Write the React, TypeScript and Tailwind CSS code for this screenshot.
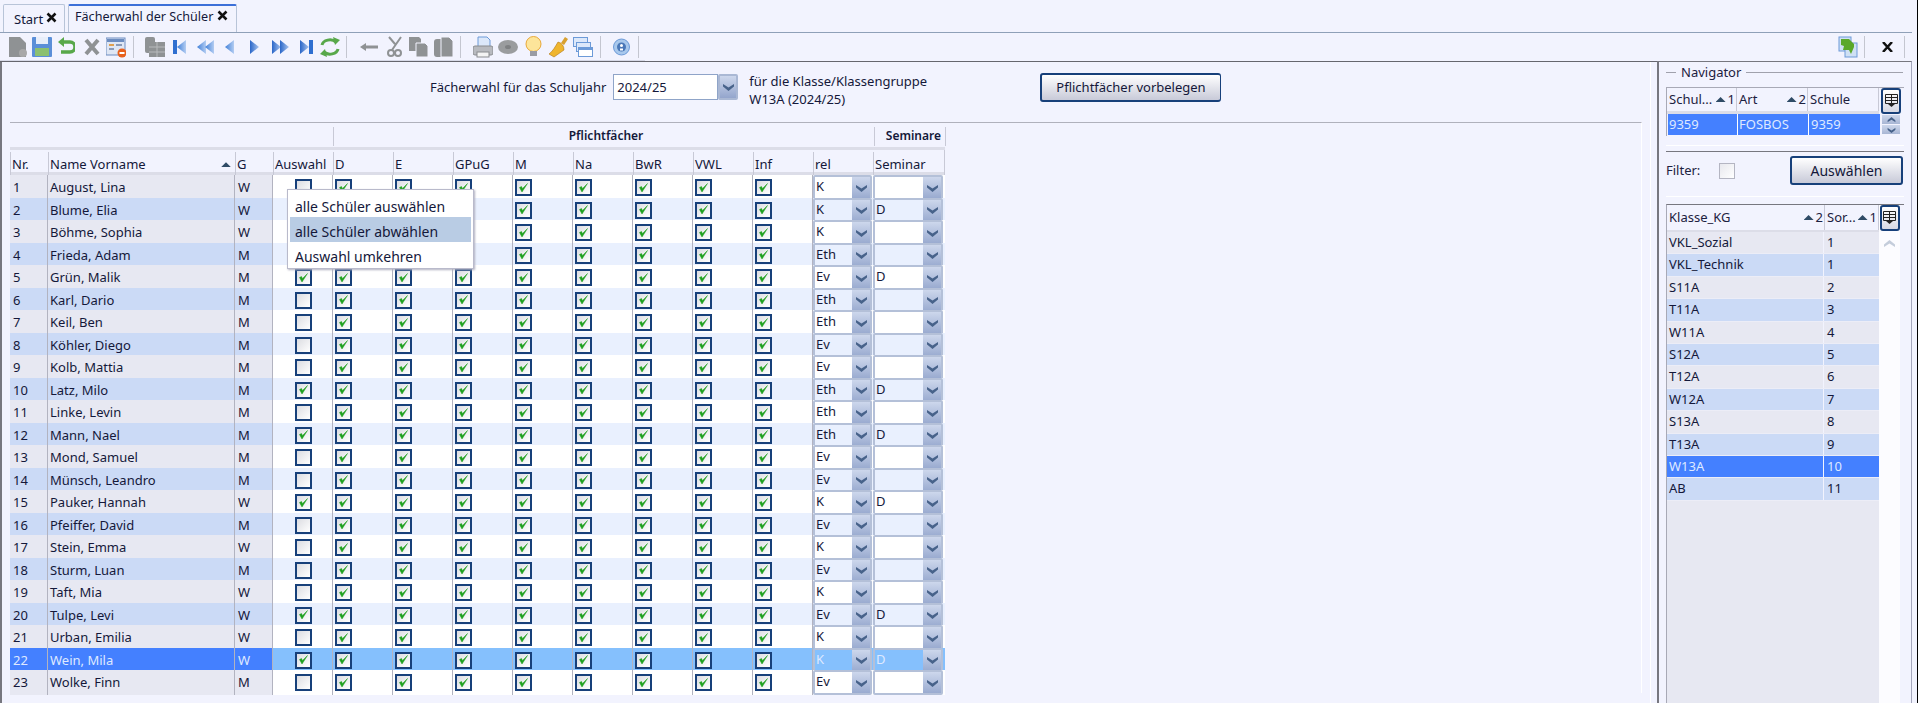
import type { ReactNode } from "react";

const students: [string, string, boolean, string, string][] = [
  ["August, Lina", "W", false, "K", ""],
  ["Blume, Elia", "W", false, "K", "D"],
  ["Böhme, Sophia", "W", false, "K", ""],
  ["Frieda, Adam", "M", false, "Eth", ""],
  ["Grün, Malik", "M", true, "Ev", "D"],
  ["Karl, Dario", "M", false, "Eth", ""],
  ["Keil, Ben", "M", false, "Eth", ""],
  ["Köhler, Diego", "M", false, "Ev", ""],
  ["Kolb, Mattia", "M", false, "Ev", ""],
  ["Latz, Milo", "M", true, "Eth", "D"],
  ["Linke, Levin", "M", false, "Eth", ""],
  ["Mann, Nael", "M", true, "Eth", "D"],
  ["Mond, Samuel", "M", false, "Ev", ""],
  ["Münsch, Leandro", "M", false, "Ev", ""],
  ["Pauker, Hannah", "W", true, "K", "D"],
  ["Pfeiffer, David", "M", false, "Ev", ""],
  ["Stein, Emma", "W", false, "K", ""],
  ["Sturm, Luan", "M", false, "Ev", ""],
  ["Taft, Mia", "W", false, "K", ""],
  ["Tulpe, Levi", "W", true, "Ev", "D"],
  ["Urban, Emilia", "W", false, "K", ""],
  ["Wein, Mila", "W", true, "K", "D"],
  ["Wolke, Finn", "M", false, "Ev", ""],
];

const subjects = ["D", "E", "GPuG", "M", "Na", "BwR", "VWL", "Inf"];

const classes: [string, number][] = [
  ["VKL_Sozial", 1],
  ["VKL_Technik", 1],
  ["S11A", 2],
  ["T11A", 3],
  ["W11A", 4],
  ["S12A", 5],
  ["T12A", 6],
  ["W12A", 7],
  ["S13A", 8],
  ["T13A", 9],
  ["W13A", 10],
  ["AB", 11],
];

const cols = "grid grid-cols-[38px_187px_38px_60px_60px_60px_60px_60px_60px_60px_60px_60px_60px_72px]";

function Ico({ w = 20, className = "", children }: { w?: number; className?: string; children: ReactNode }) {
  return (
    <svg width={w} height={22} viewBox={`0 0 ${w} 22`} className={`shrink-0 ${className}`}>
      {children}
    </svg>
  );
}

function Sep({ className = "" }: { className?: string }) {
  return <div className={`w-px h-[22px] bg-[#c4c6d0] shrink-0 ${className}`} />;
}

function Tri({ dir, dbl, bar, className = "" }: { dir: "l" | "r"; dbl?: boolean; bar?: boolean; className?: string }) {
  const one = (x: number) =>
    dir === "l" ? `M${x + 9} 4 L${x} 11 L${x + 9} 18 Z` : `M${x} 4 L${x + 9} 11 L${x} 18 Z`;
  const id = dir === "l" ? "navl" : "navr";
  return (
    <Ico w={dbl ? 18 : bar ? 14 : 10} className={className}>
      <defs>
        <linearGradient id={id} x1="0" y1="0" x2="1" y2="0">
          <stop offset="0" stopColor={dir === "l" ? "#3f7fd8" : "#2a66c8"} />
          <stop offset="1" stopColor={dir === "l" ? "#b4cdf2" : "#a8c4ee"} />
        </linearGradient>
      </defs>
      {bar && <rect x={dir === "l" ? 0 : 10} y="4" width="4" height="14" fill="#2f6fd0" />}
      <path d={one(bar ? (dir === "l" ? 4 : 1) : 0)} fill={`url(#${id})`} />
      {dbl && <path d={one(8)} fill={`url(#${id})`} />}
    </Ico>
  );
}

function Toolbar() {
  return (
    <div className="h-[28px] flex items-center pl-[8px] border-b border-[#d8dae8] w-[645px]">
      <Ico w={19}>
        <path d="M1 1h11l6 6v14H1z" fill="#8f9294" />
        <circle cx="15" cy="17" r="4" fill="#a8a8a8" />
      </Ico>
      <Ico className="ml-[5px]">
        <rect x="0" y="1" width="20" height="20" rx="1" fill="#5b8fd8" />
        <rect x="4" y="1" width="12" height="7" fill="#e8eefa" />
        <rect x="3" y="12" width="14" height="8" fill="#8cc070" />
      </Ico>
      <Ico w={17} className="ml-[6px]">
        <path d="M5 6h7a4.500 4.500 0 0 1 0 10H3" fill="none" stroke="#58a84a" strokeWidth="3.500" />
        <path d="M6 1v10L0 6z" fill="#58a84a" />
      </Ico>
      <Ico w={16} className="ml-[9px]">
        <path d="M2 4l12 14M14 4L2 18" stroke="#8f9294" strokeWidth="4" />
      </Ico>
      <Ico className="ml-[6px]">
        <rect x="0" y="2" width="19" height="17" fill="#dfe6f4" stroke="#6c8cc0" />
        <rect x="1" y="3" width="17" height="3" fill="#6c8cc0" />
        <rect x="3" y="8" width="5" height="2" fill="#e0a050" />
        <rect x="10" y="8" width="6" height="2" fill="#8a9ab8" />
        <rect x="3" y="12" width="5" height="2" fill="#8a9ab8" />
        <circle cx="16" cy="17" r="4.500" fill="#e8601c" />
        <rect x="13.500" y="16" width="5" height="2" fill="#fff" />
      </Ico>
      <Sep className="ml-[7px]" />
      <Ico className="ml-[11px]">
        <rect x="0" y="1" width="10" height="16" rx="2" fill="#8f9294" />
        <path d="M4 6h16v15H4z" fill="#8f9294" />
        <path d="M4 11h16M4 16h16M12 6v15" stroke="#b8babc" />
      </Ico>
      <Tri dir="l" bar className="ml-[8px]" />
      <Tri dir="l" dbl className="ml-[10px]" />
      <Tri dir="l" className="ml-[10px]" />
      <Tri dir="r" className="ml-[15px]" />
      <Tri dir="r" dbl className="ml-[12px]" />
      <Tri dir="r" bar className="ml-[9px]" />
      <Ico className="ml-[7px]">
        <path d="M2 9a8 6 0 0 1 14-3" fill="none" stroke="#58a84a" strokeWidth="3" />
        <path d="M13 1l7 3-5 5z" fill="#58a84a" />
        <path d="M18 13a8 6 0 0 1-14 3" fill="none" stroke="#58a84a" strokeWidth="3" />
        <path d="M7 21L0 18l5-5z" fill="#58a84a" />
      </Ico>
      <Sep className="ml-[6px]" />
      <Ico w={18} className="ml-[13px]">
        <path d="M0 11l6-4v2.500h12v3H6V15z" fill="#8f9294" />
      </Ico>
      <Ico w={15} className="ml-[9px]">
        <path d="M14 1L5 14M8 8L2 1" stroke="#8f9294" strokeWidth="2" fill="none" />
        <circle cx="4" cy="17" r="3" fill="none" stroke="#8f9294" strokeWidth="2" />
        <circle cx="11" cy="17" r="3" fill="none" stroke="#8f9294" strokeWidth="2" />
      </Ico>
      <Ico className="ml-[7px]">
        <path d="M0 1h10l2 2v12H0z" fill="#8f9294" />
        <path d="M7 7h9l3 3v11H7z" fill="#8f9294" stroke="#f2f3fe" />
      </Ico>
      <Ico className="ml-[5px]">
        <rect x="0" y="3" width="13" height="18" rx="3" fill="#8f9294" />
        <path d="M7 1h8l4 4v16H7z" fill="#8f9294" stroke="#f2f3fe" />
      </Ico>
      <Sep className="ml-[6px]" />
      <Ico className="ml-[12px]">
        <path d="M5 1h9l3 3v7H5z" fill="#dce8fa" stroke="#6c9ad8" />
        <rect x="0" y="10" width="20" height="9" rx="2" fill="#b8babf" stroke="#8a8c90" />
        <rect x="4" y="16" width="12" height="5" fill="#f4f4f4" stroke="#8a8c90" />
      </Ico>
      <Ico className="ml-[5px]">
        <ellipse cx="10" cy="11" rx="10" ry="7" fill="#9a9c9e" />
        <ellipse cx="10" cy="11" rx="3" ry="2" fill="#7e8082" />
      </Ico>
      <Ico w={19} className="ml-[6px]">
        <circle cx="9.500" cy="8" r="7.500" fill="#fde59a" stroke="#e8a838" />
        <path d="M6 15h7v5H6z" fill="#9a9ca4" />
      </Ico>
      <Ico className="ml-[5px]">
        <path d="M13 7l4-6 3 2-4 6z" fill="#d8a030" />
        <path d="M10 6c4 1 6 4 6 8L6 21 1 18c4-3 6-7 9-12z" fill="#efb52e" stroke="#b07818" strokeWidth=".6" />
      </Ico>
      <Ico className="ml-[5px]">
        <rect x=".5" y="1.500" width="14" height="9" fill="#dce8fa" stroke="#6c9ad8" />
        <rect x="3.500" y="6.500" width="14" height="9" fill="#dce8fa" stroke="#6c9ad8" />
        <rect x="5.500" y="11.500" width="14" height="9" fill="#fff" stroke="#6c9ad8" />
        <rect x="5.500" y="11.500" width="14" height="2.500" fill="#6c9ad8" />
      </Ico>
      <Sep className="ml-[7px]" />
      <Ico w={17} className="ml-[12px]">
        <circle cx="8.500" cy="11" r="8" fill="#a8c8ec" stroke="#6c9ad8" />
        <circle cx="8.500" cy="11" r="4.500" fill="#4a78b8" />
        <circle cx="8.500" cy="9.500" r="1.500" fill="#fff" />
        <rect x="7" y="12.500" width="3" height="2" fill="#fff" />
      </Ico>
      <Sep className="ml-[8px]" />
    </div>
  );
}

function Check({ on, boxed }: { on: boolean; boxed?: boolean }) {
  return (
    <div
      className={`w-[17px] h-[17px] border-[2px] border-[#17407a] bg-gradient-to-br from-[#dcdde2] to-[#ffffff] flex items-center justify-center shrink-0 ${
        boxed ? "ml-[22px]" : "ml-[2px]"
      }`}
    >
      {on && (
        <svg width="9" height="10" viewBox="0 0 9 10">
          <path d="M.5 4.500L3 9 8.500 .5 3.500 5.500 2.500 3.500z" fill="#1fa01f" stroke="#1fa01f" strokeWidth=".5" />
        </svg>
      )}
    </div>
  );
}

function Chevron() {
  return (
    <svg width="11" height="8" viewBox="0 0 11 8">
      <path d="M0 1l5.500 3.500L11 1v2.500L5.500 8 0 3.500z" fill="#47628a" />
    </svg>
  );
}

function Combo({ v, sel, className = "mr-[1px]" }: { v: string; sel: boolean; className?: string }) {
  return (
    <div className={`h-full flex border-[2px] border-[#b4c0d8] rounded-[2px] ${className}`}>
      <div className={`flex-1 pl-[1px] leading-[19px] mr-[2px] ${sel ? "bg-[#85c0fd] text-[#dfe9ff]" : ""}`}>{v}</div>
      <div className="w-[18px] h-full bg-gradient-to-b from-[#cdd7ec] to-[#9aabd0] flex items-center justify-center shrink-0">
        <Chevron />
      </div>
    </div>
  );
}

function HeadCell({ children, sort, className = "" }: { children?: ReactNode; sort?: boolean; className?: string }) {
  return (
    <div className={`relative flex items-center pl-[1px] pt-[5px] h-full ${className}`}>
      <div className="absolute left-0 top-[2px] bottom-0 w-px bg-[#c8c9d6]" />
      <span className="pl-[1px] whitespace-nowrap">{children}</span>
      {sort && <SortUp className="ml-auto mr-[4px]" />}
    </div>
  );
}

function SortUp({ className = "" }: { className?: string }) {
  return <span className={`inline-block w-[10px] h-[5px] bg-[#2f4b66] [clip-path:polygon(50%_0,100%_100%,0_100%)] ${className}`} />;
}

function StudentTable() {
  return (
    <div className="w-[1632px] ml-[8px] border-t border-r border-t-[#b0b1bc] border-r-white relative">
      <div className="h-[24px] flex font-semibold text-[12px]">
        <div className="w-[323px]" />
        <div className="w-px h-[19px] mt-[4px] bg-[#c8c9d6]" />
        <div className="w-[540px] text-center leading-[25px] pl-[4px]">Pflichtfächer</div>
        <div className="w-px h-[19px] mt-[4px] bg-[#c8c9d6]" />
        <div className="w-[70px] text-right leading-[25px] pr-[4px]">Seminare</div>
        <div className="w-px h-[19px] mt-[4px] bg-[#c8c9d6]" />
      </div>
      <div className="w-[935px]">
        <div className="h-[3px] bg-[#dcdde8]" />
        <div className={`${cols} h-[22px]`}>
          <HeadCell>Nr.</HeadCell>
          <HeadCell sort>Name Vorname</HeadCell>
          <HeadCell>G</HeadCell>
          <HeadCell>Auswahl</HeadCell>
          {subjects.map((s) => (
            <HeadCell key={s}>{s}</HeadCell>
          ))}
          <HeadCell>rel</HeadCell>
          <HeadCell className="border-r border-[#c8c9d6]">Seminar</HeadCell>
        </div>
        <div className="h-[3px] bg-[#dcdde8]" />
        {students.map(([name, g, on, rel, sem], i) => {
          const sel = i === 21;
          const even = i % 2 === 1;
          const fixed = sel ? "bg-[#4480ff] text-[#dfe9ff]" : even ? "bg-[#cbdaf6]" : "bg-[#e7e8f2]";
          const data = sel ? "bg-[#85c0fd]" : even ? "bg-[#e9f0fe]" : "bg-white";
          return (
            <div key={name} className={`${cols} h-[22.5px] border-b border-[#b2b3c0]`}>
              <div className={`${fixed} pl-[3px] leading-[25px] border-r border-[#b2b3c0]`}>{i + 1}</div>
              <div className={`${fixed} pl-[2px] leading-[25px] border-r border-[#b2b3c0]`}>{name}</div>
              <div className={`${fixed} pl-[3px] leading-[25px] border-r border-[#b2b3c0]`}>{g}</div>
              <div className={`${data} flex items-center border-r border-[#b2b3c0]`}>
                <Check on={on} boxed />
              </div>
              {subjects.map((s) => (
                <div key={s} className={`${data} flex items-center border-r border-[#b2b3c0]`}>
                  <Check on />
                </div>
              ))}
              <div className={`${data} overflow-hidden`}>
                <Combo v={rel} sel={sel} />
              </div>
              <div className={`${data} overflow-hidden`}>
                <Combo v={sem} sel={sel} className="mr-[2px]" />
              </div>
            </div>
          );
        })}
      </div>
      <div className="absolute left-[277px] top-[66px] w-[187px] h-[80px] bg-white border border-[#b9bacb] shadow-[1px_1px_2px_#b0b1c0] p-[2px] text-[14px] z-10">
        <div className="h-[25px] leading-[29px] pl-[5px]">alle Schüler auswählen</div>
        <div className="h-[25px] leading-[29px] pl-[5px] bg-[#b9cce4]">alle Schüler abwählen</div>
        <div className="h-[25px] leading-[29px] pl-[5px]">Auswahl umkehren</div>
      </div>
    </div>
  );
}

function TableMenuBtn() {
  return (
    <div className="w-[20px] h-[26px] rounded-[3px] border-[2px] border-[#17407a] bg-gradient-to-b from-white to-[#d6d8e4] flex items-center justify-center">
      <svg width="13" height="14" viewBox="0 0 13 14">
        <path d="M.5.500h12v9H.5zM.5 3.500h12M.5 6.500h12M6.500.500v9" fill="none" stroke="#222" />
        <path d="M3 10h7l-3.500 3z" fill="#222" />
      </svg>
    </div>
  );
}

function HeadCellNav({ label, idx }: { label: string; idx?: string }) {
  return (
    <div className="relative flex items-center pl-[2px] h-full border-r border-[#c8c9d6] text-[#1c2140]">
      <span>{label}</span>
      {idx && (
        <span className="ml-auto flex items-center gap-[2px] pr-[1px]">
          <SortUp />
          {idx}
        </span>
      )}
    </div>
  );
}

function Navigator() {
  return (
    <div className="flex-1 ml-[6px] -mt-px border-l-[2px] border-t-[1px] border-r border-[#77777f] border-r-[#a4a6bc] bg-[#f2f3fe] pl-[7px] pr-[7px] pt-[2px] flex flex-col min-h-0 mr-[5px]">
      <div className="flex items-center h-[17px]">
        <div className="w-[10px] h-px bg-[#a0a1ac]" />
        <span className="mx-[5px] text-[#1c2140]">Navigator</span>
        <div className="flex-1 h-px bg-[#a0a1ac] mr-[1px]" />
      </div>
      <div className="mt-[6px] relative h-[49px] flex border-t border-[#a8a9b6] border-l border-l-[#a8a9b6]">
        <div className="w-[212px]">
          <div className="grid grid-cols-[70px_71px_71px] h-[23px]">
            <HeadCellNav label="Schul..." idx="1" />
            <HeadCellNav label="Art" idx="2" />
            <HeadCellNav label="Schule" />
          </div>
          <div className="h-[3px] bg-[#dcdde8]" />
          <div className="grid grid-cols-[70px_71px_71px] h-[21px] text-[#dfe9ff] ml-[1px]">
            <div className="bg-[#4480ff] border-r border-white pl-[1px] leading-[21px]">9359</div>
            <div className="bg-[#4480ff] border-r border-white pl-[1px] leading-[21px]">FOSBOS</div>
            <div className="bg-[#4480ff] pl-[2px] leading-[21px]">9359</div>
          </div>
        </div>
        <div className="flex flex-col items-center ml-[2px] w-[20px]">
          <TableMenuBtn />
          <div className="h-[9px] w-[18px] mt-[1px] bg-gradient-to-b from-[#cdd7ec] to-[#a8b6d4] flex items-center justify-center">
            <span className="rotate-180 flex scale-75"><Chevron /></span>
          </div>
          <div className="h-[9px] w-[18px] mt-[1px] bg-gradient-to-b from-[#cdd7ec] to-[#a8b6d4] flex items-center justify-center">
            <span className="flex scale-75"><Chevron /></span>
          </div>
        </div>
      </div>
      <div className="mt-[9px] h-px bg-white" />
      <div className="mt-[5px] h-px bg-[#77777f]" />
      <div className="mt-[4px] h-[29px] flex items-center">
        <span className="text-[#1c2140]">Filter:</span>
        <div className="ml-[19px] w-[16px] h-[16px] border border-[#b4b5c2] bg-gradient-to-br from-[#e8e8ee] to-white" />
        <div className="ml-auto mr-px w-[113px] h-[29px] rounded-[3px] border-[2px] border-[#17407a] bg-gradient-to-b from-white to-[#c8cad8] text-center leading-[25px] text-[14px]">
          Auswählen
        </div>
      </div>
      <div className="mt-[11px] h-px bg-white" />
      <div className="mt-[7px] flex-1 min-h-0 flex border-t-[1px] border-[#77777f] border-l border-l-[#a8a9b6]">
        <div className="w-[212px] flex flex-col bg-[#e7e8f2]">
          <div className="grid grid-cols-[158px_54px] h-[25px] bg-[#f2f3fe]">
            <HeadCellNav label="Klasse_KG" idx="2" />
            <HeadCellNav label="Sor..." idx="1" />
          </div>
          <div className="h-[2px] bg-[#dcdde8]" />
          {classes.map(([c, n], i) => {
            const sel = c === "W13A";
            const bg = sel ? "bg-[#4480ff] text-[#dfe9ff]" : i % 2 ? "bg-[#cbdaf6]" : "bg-[#e7e8f2]";
            return (
              <div key={c} className={`grid grid-cols-[157px_55px] h-[22.4px] leading-[21px] ${bg} border-b border-[#ecedf7]`}>
                <div className="pl-[2px] border-r border-[#f2f3fe]">{c}</div>
                <div className="pl-[3px]">{n}</div>
              </div>
            );
          })}
        </div>
        <div className="w-[21px] bg-[#fcfcff] flex flex-col items-center">
          <TableMenuBtn />
          <div className="mt-[9px] opacity-30 rotate-180 flex"><Chevron /></div>
        </div>
      </div>
    </div>
  );
}

export default function App() {
  return (
    <div className="w-[1918px] h-[703px] overflow-hidden flex flex-col bg-[#f2f3fe] border-r border-black text-[13px] text-[#14183a] font-['Noto_Sans',sans-serif]">
      <div className="h-[33px] flex items-end pl-[3px] gap-[3px] border-b border-[#8fa0b8] mr-[5px] shrink-0">
        <div className="w-[62px] h-[28px] border border-b-0 border-[#b8c4d8] rounded-t-[2px] flex items-center pl-[10px] gap-[3px] pt-[2px]">
          Start
          <svg width="11" height="11" viewBox="0 0 11 11" className="mb-[5px]">
            <path d="M1.500 1.500l8 8M9.500 1.500l-8 8" stroke="#111" strokeWidth="2.500" />
          </svg>
        </div>
        <div className="w-[169px] h-[28px] border border-b-0 border-[#b8c4d8] border-t-[2px] border-t-[#3b6fd8] rounded-t-[2px] flex items-center pl-[6px] gap-[4px] pb-[4px] text-[12.6px]">
          Fächerwahl der Schüler
          <svg width="11" height="11" viewBox="0 0 11 11" className="mb-[3px]">
            <path d="M1.500 1.500l8 8M9.500 1.500l-8 8" stroke="#111" strokeWidth="2.500" />
          </svg>
        </div>
      </div>
      <div className="h-[29px] flex items-stretch border-b border-[#66666e] mr-[5px] shrink-0">
        <Toolbar />
        <div className="ml-auto flex items-center pb-[1px]">
          <Ico>
            <rect x="1" y="1" width="12" height="14" fill="#cfe0f4" stroke="#6c9ad8" />
            <rect x="7" y="7" width="12" height="14" fill="#cfe0f4" stroke="#6c9ad8" />
            <path d="M3 3h8l5 5v3l-3 7-2-4H5l1-4-3-1z" fill="#5aa82a" />
          </Ico>
          <Sep className="ml-[6px]" />
          <svg width="11" height="10" viewBox="0 0 11 10" className="ml-[17px]">
            <path d="M1 0l9 10M10 0L1 10" stroke="#111" strokeWidth="2.500" />
          </svg>
          <Sep className="ml-[11px]" />
          <div className="w-[7px]" />
        </div>
      </div>
      <div className="flex-1 min-h-0 flex">
        <div className="w-[1651px] border-l-[2px] border-[#77777f] border-r border-r-white shrink-0">
          <div className="h-[60px] relative flex items-start">
            <div className="ml-[428px] mt-[12px] flex items-center">
              <span className="leading-[26px]">Fächerwahl für das Schuljahr</span>
              <div className="ml-[7px] w-[105px] h-[26px] border border-[#8fa4c8] bg-white pl-[3px] leading-[24px]">2024/25</div>
              <div className="w-[20px] h-[26px] border-[2px] border-[#aab8d4] rounded-[2px] bg-gradient-to-b from-[#cdd7ec] to-[#94a5cc] flex items-center justify-center">
                <Chevron />
              </div>
            </div>
            <div className="ml-[11px] mt-[10px] leading-[18px]">
              <div>für die Klasse/Klassengruppe</div>
              <div>W13A (2024/25)</div>
            </div>
            <div className="absolute left-[1038px] top-[11px] w-[181px] h-[29px] rounded-[3px] border-[2px] border-[#17407a] border-r-[1px] bg-gradient-to-b from-white to-[#c8cad8] text-center leading-[25px]">
              Pflichtfächer vorbelegen
            </div>
          </div>
          <StudentTable />
        </div>
        <Navigator />
      </div>
    </div>
  );
}
